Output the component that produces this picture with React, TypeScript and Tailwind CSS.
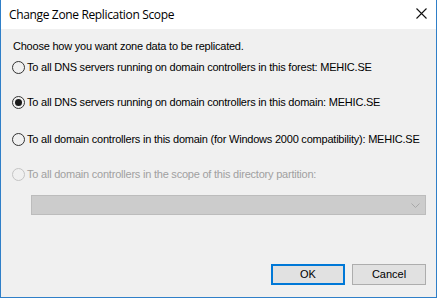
import React from 'react';

const Radio: React.FC<{ checked?: boolean; disabled?: boolean; label: string }> = ({ checked, disabled, label }) => (
  <div className="flex items-center h-[13px]">
    <span
      className={`shrink-0 flex items-center justify-center w-[13px] h-[13px] rounded-full border bg-transparent ${
        disabled ? 'border-[#c4c4c4]' : 'border-[#333333]'
      }`}
    >
      {checked && <span className="w-[7px] h-[7px] rounded-full bg-[#1a1a1a]" />}
    </span>
    <span className={`ml-[2px] whitespace-nowrap ${disabled ? 'text-[#a0a0a0]' : 'text-black'}`}>{label}</span>
  </div>
);

export default function App() {
  return (
    <div className="w-[439px] h-[298px] bg-white flex" style={{ fontFamily: '"Liberation Sans", Arial, sans-serif' }}>
      <div className="w-[437px] h-[298px] flex flex-col border-l border-r border-b border-[#2f7fc8]">
        {/* title bar */}
        <div className="h-[29px] bg-white flex items-center justify-between pl-[8px] pr-[9px]">
          <span className="text-[12px] text-black tracking-[-0.35px]" style={{ fontFamily: '"Open Sans", "Noto Sans", sans-serif' }}>
            Change Zone Replication Scope
          </span>
          <svg width="11" height="11" viewBox="0 0 11 11" className="mt-[-2px]">
            <path d="M0.5 0.5 L10.5 10.5 M10.5 0.5 L0.5 10.5" stroke="#111" strokeWidth="1.1" fill="none" />
          </svg>
        </div>

        {/* body */}
        <div className="flex-1 bg-[#f0f0f0] flex flex-col pl-[11px] pr-[10px] pt-[11px] text-[11px] leading-[13px] tracking-[-0.22px]">
          <div className="text-black pl-[1px]">Choose how you want zone data to be replicated.</div>
          <div className="mt-[8px]">
            <Radio label="To all DNS servers running on domain controllers in this forest: MEHIC.SE" />
          </div>
          <div className="mt-[22px]">
            <Radio checked label="To all DNS servers running on domain controllers in this domain: MEHIC.SE" />
          </div>
          <div className="mt-[24px]">
            <Radio label="To all domain controllers in this domain (for Windows 2000 compatibility): MEHIC.SE" />
          </div>
          <div className="mt-[22px]">
            <Radio disabled label="To all domain controllers in the scope of this directory partition:" />
          </div>
          <div className="mt-[14px] ml-[19px] mr-[0px] h-[20px] bg-[#cccccc] border border-[#bcbcbc] flex items-center justify-end pr-[5px]">
            <svg width="9" height="5" viewBox="0 0 9 5">
              <path d="M0.5 0.5 L4.5 4.5 L8.5 0.5" stroke="#a8a8a8" fill="none" />
            </svg>
          </div>
          <div className="mt-[49px] flex justify-end gap-[7px] tracking-normal">
            <button className="w-[74px] h-[21px] border-2 border-[#0078d7] bg-[#e1e1e1] text-black text-[11px]">OK</button>
            <button className="w-[74px] h-[21px] border border-[#adadad] bg-[#e1e1e1] text-black text-[11px]">Cancel</button>
          </div>
        </div>
      </div>
    </div>
  );
}
